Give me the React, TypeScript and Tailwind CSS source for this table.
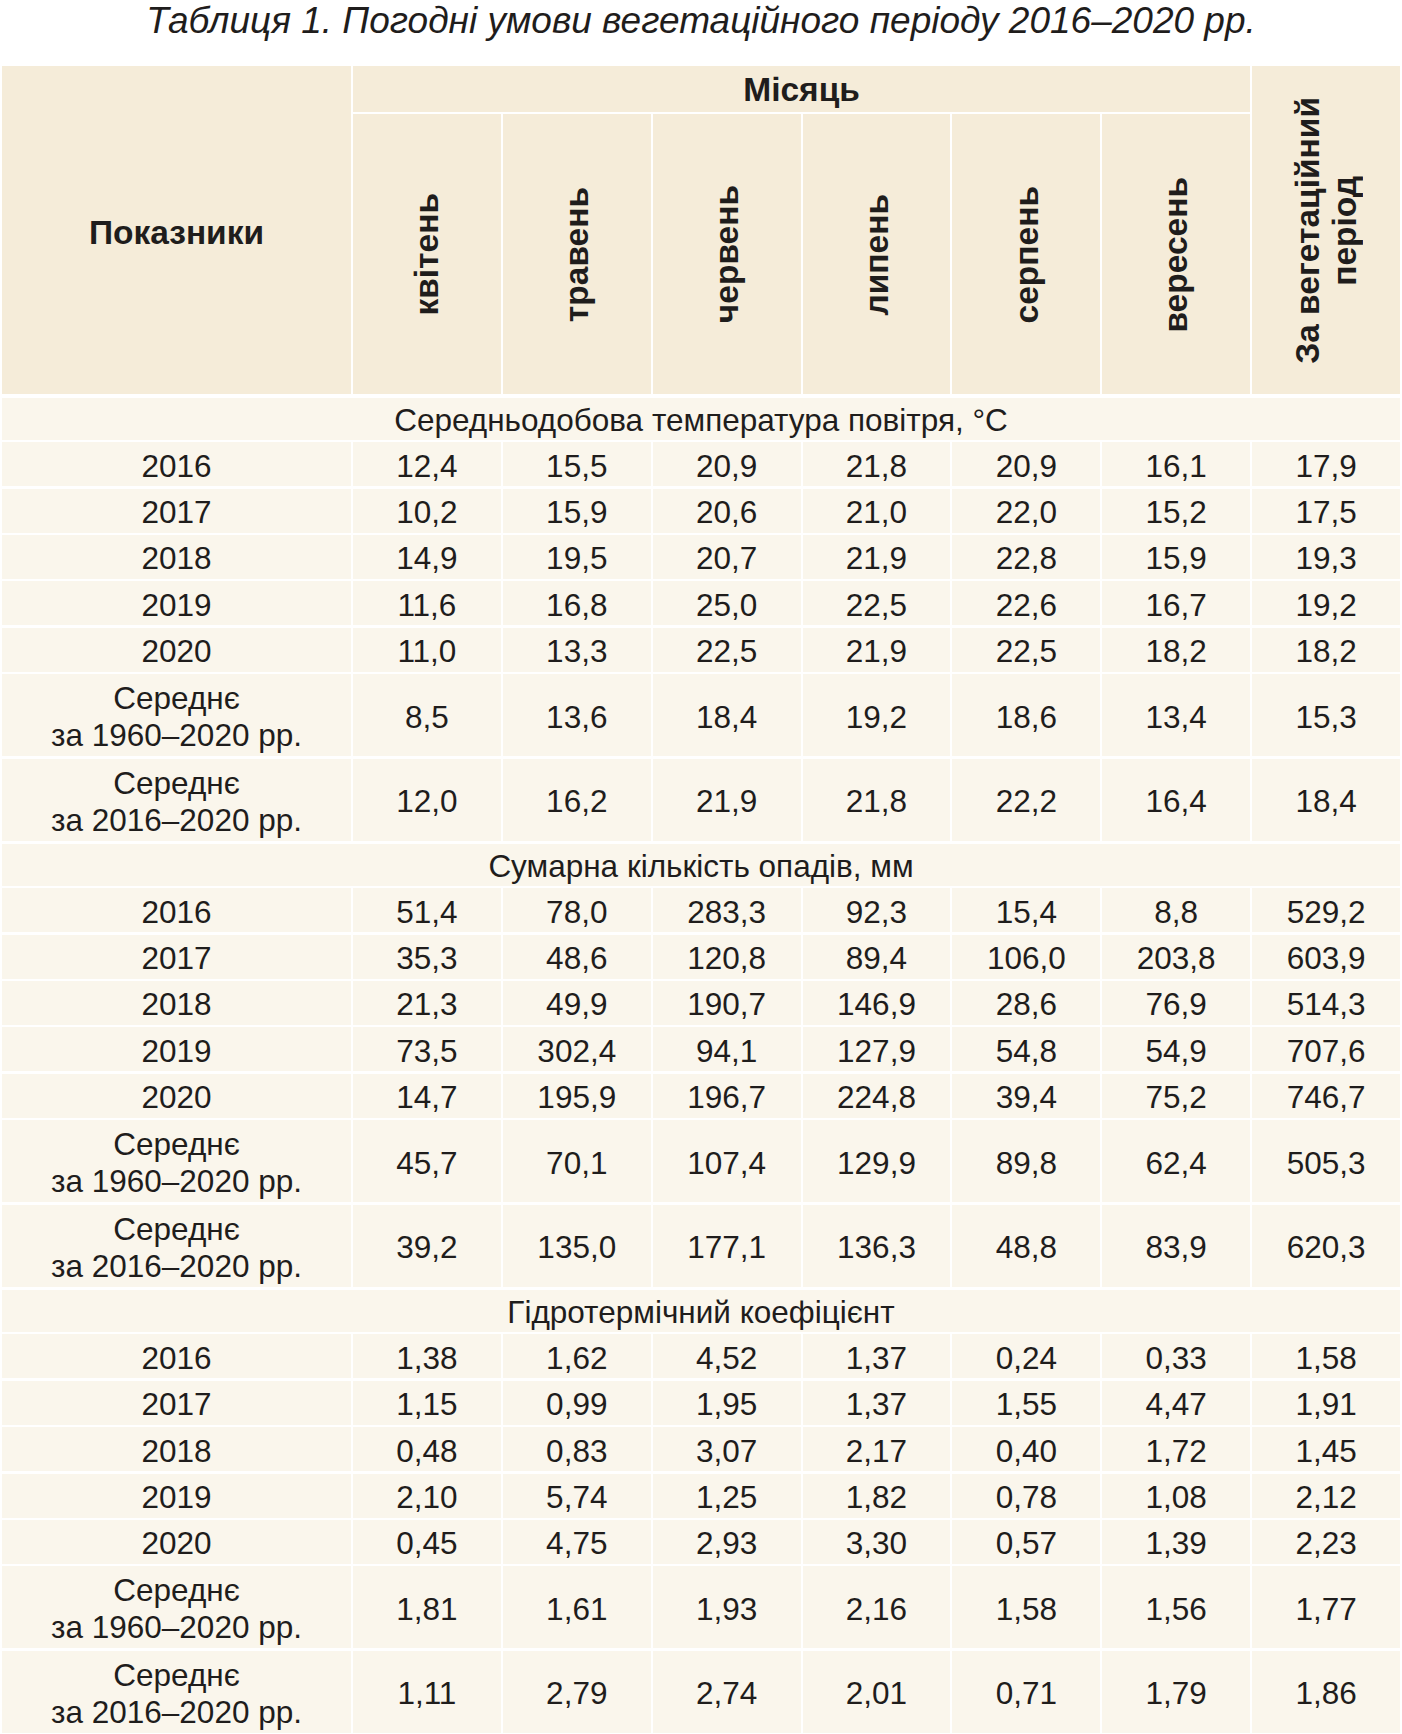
const months = ["квітень", "травень", "червень", "липень", "серпень", "вересень"];

type Row = { label: string; values: string[]; avg?: boolean };
type Section = { title: string; rows: Row[] };

const sections: Section[] = [
  {
    title: "Середньодобова температура повітря, °C",
    rows: [
      { label: "2016", values: ["12,4", "15,5", "20,9", "21,8", "20,9", "16,1", "17,9"] },
      { label: "2017", values: ["10,2", "15,9", "20,6", "21,0", "22,0", "15,2", "17,5"] },
      { label: "2018", values: ["14,9", "19,5", "20,7", "21,9", "22,8", "15,9", "19,3"] },
      { label: "2019", values: ["11,6", "16,8", "25,0", "22,5", "22,6", "16,7", "19,2"] },
      { label: "2020", values: ["11,0", "13,3", "22,5", "21,9", "22,5", "18,2", "18,2"] },
      { label: "1960–2020", avg: true, values: ["8,5", "13,6", "18,4", "19,2", "18,6", "13,4", "15,3"] },
      { label: "2016–2020", avg: true, values: ["12,0", "16,2", "21,9", "21,8", "22,2", "16,4", "18,4"] },
    ],
  },
  {
    title: "Сумарна кількість опадів, мм",
    rows: [
      { label: "2016", values: ["51,4", "78,0", "283,3", "92,3", "15,4", "8,8", "529,2"] },
      { label: "2017", values: ["35,3", "48,6", "120,8", "89,4", "106,0", "203,8", "603,9"] },
      { label: "2018", values: ["21,3", "49,9", "190,7", "146,9", "28,6", "76,9", "514,3"] },
      { label: "2019", values: ["73,5", "302,4", "94,1", "127,9", "54,8", "54,9", "707,6"] },
      { label: "2020", values: ["14,7", "195,9", "196,7", "224,8", "39,4", "75,2", "746,7"] },
      { label: "1960–2020", avg: true, values: ["45,7", "70,1", "107,4", "129,9", "89,8", "62,4", "505,3"] },
      { label: "2016–2020", avg: true, values: ["39,2", "135,0", "177,1", "136,3", "48,8", "83,9", "620,3"] },
    ],
  },
  {
    title: "Гідротермічний коефіцієнт",
    rows: [
      { label: "2016", values: ["1,38", "1,62", "4,52", "1,37", "0,24", "0,33", "1,58"] },
      { label: "2017", values: ["1,15", "0,99", "1,95", "1,37", "1,55", "4,47", "1,91"] },
      { label: "2018", values: ["0,48", "0,83", "3,07", "2,17", "0,40", "1,72", "1,45"] },
      { label: "2019", values: ["2,10", "5,74", "1,25", "1,82", "0,78", "1,08", "2,12"] },
      { label: "2020", values: ["0,45", "4,75", "2,93", "3,30", "0,57", "1,39", "2,23"] },
      { label: "1960–2020", avg: true, values: ["1,81", "1,61", "1,93", "2,16", "1,58", "1,56", "1,77"] },
      { label: "2016–2020", avg: true, values: ["1,11", "2,79", "2,74", "2,01", "0,71", "1,79", "1,86"] },
    ],
  },
];

const head = "bg-[#f5ecd9] flex items-center justify-center font-bold text-[33.5px]";
const body = "bg-[#faf6ec] flex items-center justify-center text-center pt-[4px]";

export default function App() {
  return (
    <div className="w-[1402px] bg-white text-[#1f1d1c] font-['Liberation_Sans',Arial,sans-serif]">
      <h1 className="h-[66px] pt-[1px] text-center text-[37px] italic leading-[40px] font-['Liberation_Sans_Narrow','Liberation_Sans',sans-serif]">
        Таблиця 1. Погодні умови вегетаційного періоду 2016–2020 рр.
      </h1>

      <div className="ml-[2px] w-[1398px] grid grid-cols-[349px_repeat(7,minmax(0,1fr))] gap-x-[2px] gap-y-[2.4px] text-[31.5px]">
        {/* header */}
        <div className={`${head} row-span-2 pt-[6px]`}>Показники</div>
        <div className={`${head} col-span-6 h-[46px] pt-[3px]`}>Місяць</div>
        <div className={`${head} row-span-2`}>
          <span className="[writing-mode:vertical-rl] rotate-180 text-center leading-[37px]">
            За вегетаційний
            <br />
            період
          </span>
        </div>
        {months.map((m) => (
          <div key={m} className={`${head} h-[280px]`}>
            <span className="[writing-mode:vertical-rl] rotate-180 leading-none">{m}</span>
          </div>
        ))}

        {sections.map((s) => (
          <div key={s.title} className="contents">
            <div className={`${body} col-span-8 h-[42px] mt-[1px]`}>{s.title}</div>
            {s.rows.map((r) => (
              <div key={r.label} className="contents">
                <div className={`${body} ${r.avg ? "h-[82px] leading-[37px]" : "h-[44px]"}`}>
                  {r.avg ? (
                    <span>
                      Середнє
                      <br />
                      за {r.label} рр.
                    </span>
                  ) : (
                    r.label
                  )}
                </div>
                {r.values.map((v, i) => (
                  <div key={i} className={`${body} ${r.avg ? "h-[82px]" : "h-[44px]"}`}>
                    {v}
                  </div>
                ))}
              </div>
            ))}
          </div>
        ))}
      </div>
    </div>
  );
}
